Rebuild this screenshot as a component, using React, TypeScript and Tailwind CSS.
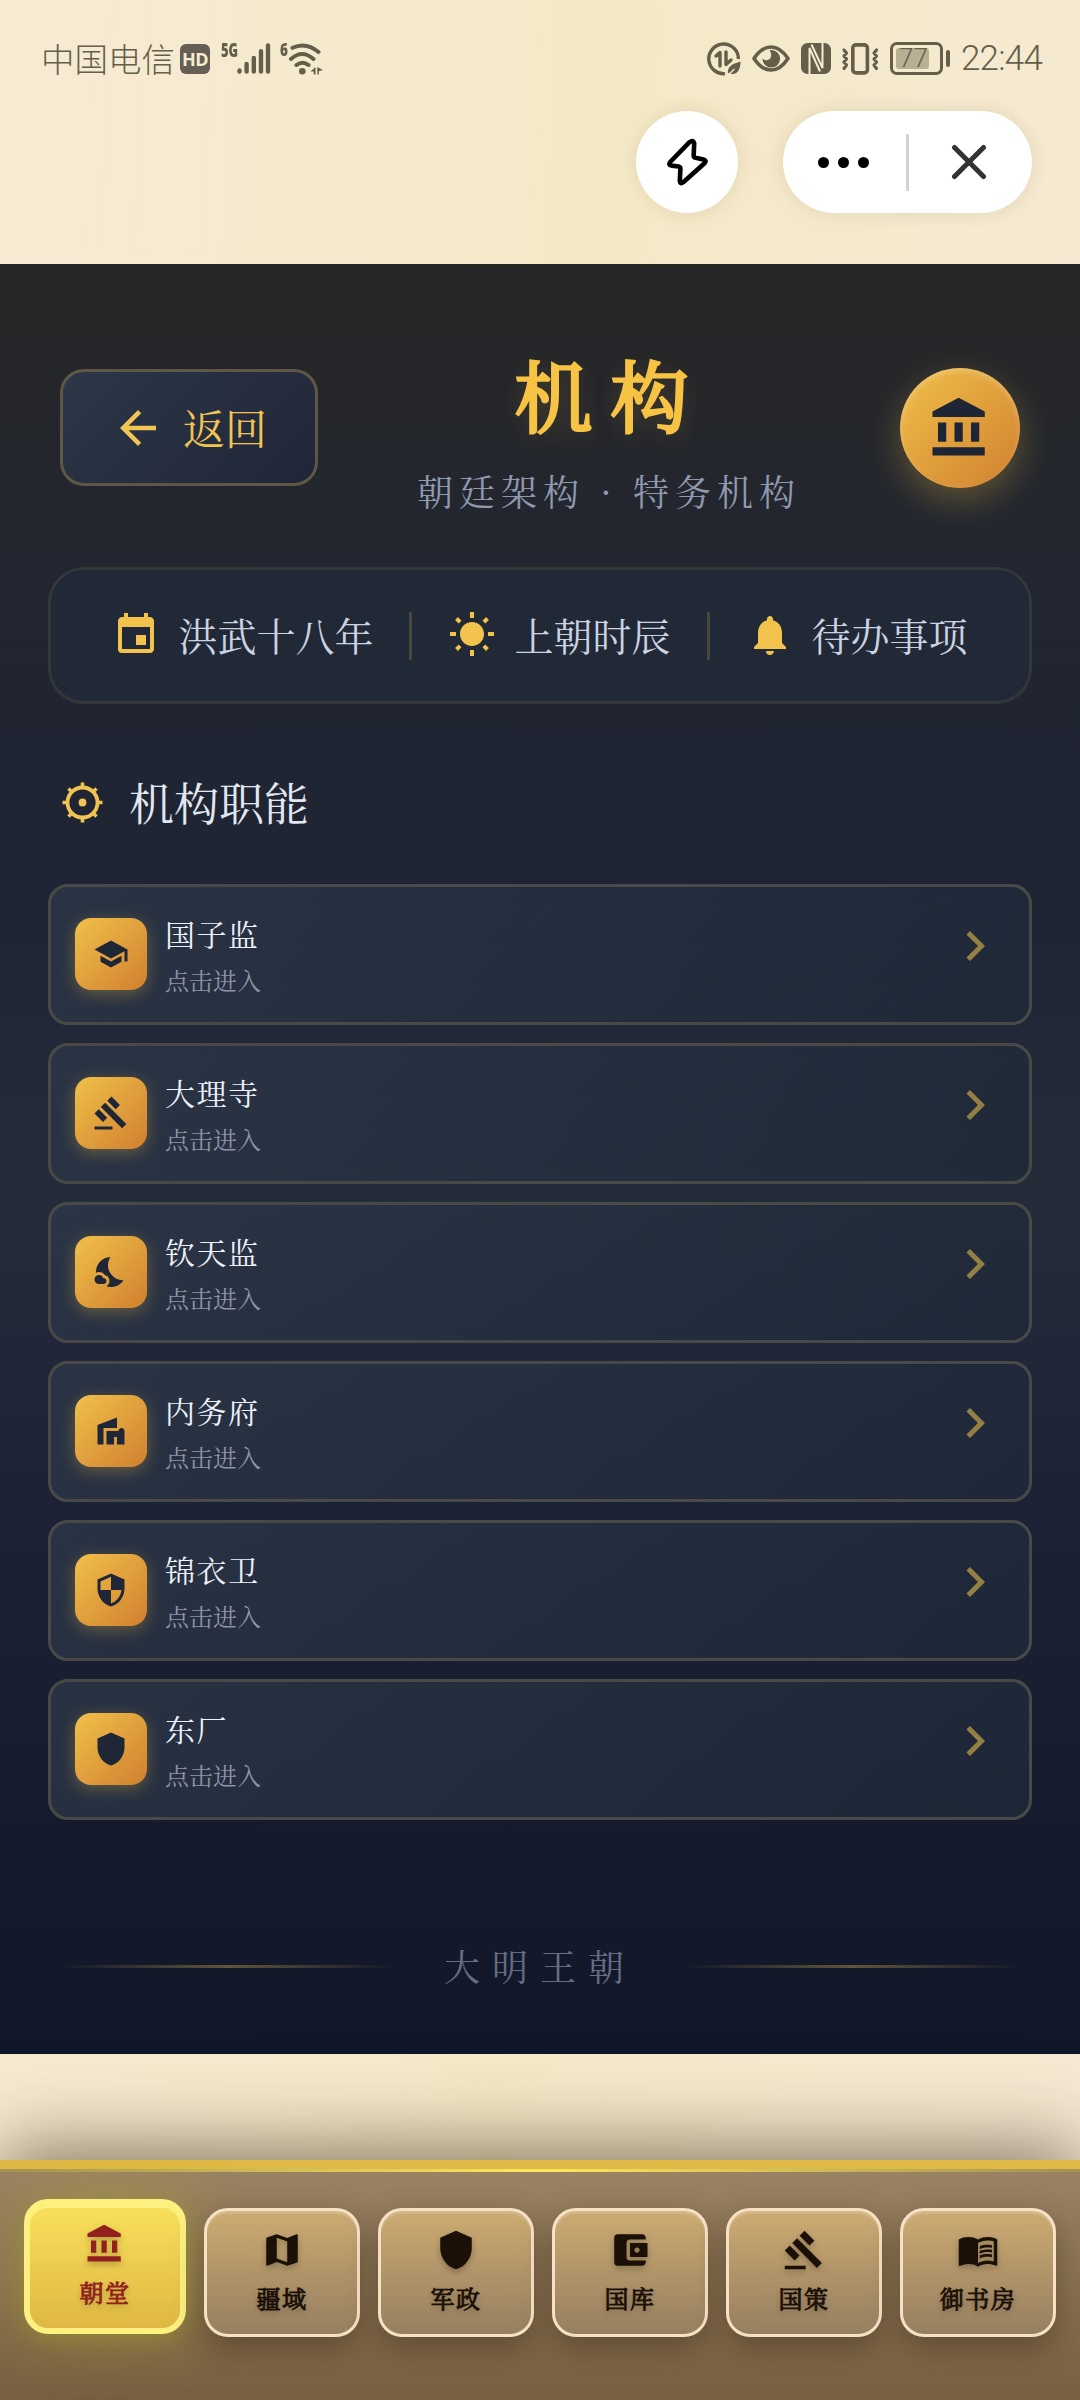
import {
  MdAccountBalanceWallet,
  MdArrowBack,
  MdChevronRight,
  MdEvent,
  MdGavel,
  MdMap,
  MdMenuBook,
  MdNightsStay,
  MdNotifications,
  MdSchool,
  MdSecurity,
  MdShield,
  MdVilla,
  MdWbSunny,
} from "react-icons/md"

const departments = [
  { name: "国子监", icon: MdSchool },
  { name: "大理寺", icon: MdGavel },
  { name: "钦天监", icon: MdNightsStay },
  { name: "内务府", icon: MdVilla },
  { name: "锦衣卫", icon: MdSecurity },
  { name: "东厂", icon: MdShield },
]

const infoItems = [
  { label: "洪武十八年", icon: MdEvent },
  { label: "上朝时辰", icon: MdWbSunny },
  { label: "待办事项", icon: MdNotifications },
]

const tabs = [
  { label: "朝堂", icon: HallIcon },
  { label: "疆域", icon: MdMap },
  { label: "军政", icon: MdShield },
  { label: "国库", icon: MdAccountBalanceWallet },
  { label: "国策", icon: MdGavel },
  { label: "御书房", icon: MdMenuBook },
]

function HallIcon({ className }: { className?: string }) {
  return (
    <svg className={className} viewBox="0 0 24 24" fill="currentColor">
      <path d="M4 10v7h3v-7H4zm6 0v7h3v-7h-3zM2 22h19v-3H2v3zm14-12v7h3v-7h-3zm-4.5-9L2 6v2h19V6l-9.5-5z" />
    </svg>
  )
}

function SignalIcon() {
  return (
    <svg width="34" height="31" viewBox="0 0 34 31" stroke="currentColor" strokeWidth="4.4" strokeLinecap="round">
      <path d="M2.5 27.5v1M9.6 21v7.6M16.8 15v13.6M24 8.2v20.4M31 2.5v26" />
    </svg>
  )
}

function WifiIcon() {
  return (
    <svg width="36" height="32" viewBox="0 0 36 32" fill="none" stroke="currentColor" strokeWidth="4" strokeLinecap="round">
      <path d="M4.5 4.8Q18 -1.5 30.5 9M3 16Q14 6 25.5 16M8.5 22Q14.5 17.5 20.5 22" />
      <circle cx="14.3" cy="28.3" r="3.3" fill="currentColor" stroke="none" />
      <path d="M22.5 28.5l5-4.5v7.5h-1.8v-3zM29.3 24v7.5h1.5v-3.2l4-1.3z" fill="currentColor" stroke="none" />
    </svg>
  )
}

function DataSaverIcon() {
  return (
    <svg width="34" height="34" viewBox="0 0 34 34" fill="none" stroke="currentColor" strokeWidth="3.4">
      <path d="M18 31.6A14.8 14.8 0 1 1 31.4 17" />
      <path d="M9 14l4-3.5V24M19 10v12.5l5-4.5" strokeLinejoin="round" strokeLinecap="round" />
      <path d="M21 31c-1-6 4-9 12.5-11.5C33.5 28 30 34.5 21 31z" fill="currentColor" stroke="none" />
      <path d="M20.5 33.5l7-6.5" stroke="#f5ebcf" strokeWidth="1.3" />
    </svg>
  )
}

function EyeIcon() {
  return (
    <svg width="38" height="27" viewBox="0 0 38 27" fill="none">
      <path d="M2 13.5Q9.5 2 19 2T36 13.5Q28.5 25 19 25T2 13.5z" stroke="currentColor" strokeWidth="3.6" strokeLinejoin="round" />
      <path d="M19.5 5a8.8 8.8 0 1 1-9 8.5 5 5 0 0 0 8.7-3Q19.5 8 17.5 5.2z" fill="currentColor" />
    </svg>
  )
}

function NfcIcon() {
  return (
    <svg width="30" height="31" viewBox="0 0 30 31">
      <rect width="30" height="31" rx="6.5" fill="currentColor" />
      <path d="M8.5 31V5L19 28.5M21.5 0V25L10.5 1.5" fill="none" stroke="#f5ebcf" strokeWidth="2" />
    </svg>
  )
}

function VibrateIcon() {
  return (
    <svg width="38" height="32" viewBox="0 0 38 32" fill="none" stroke="currentColor" strokeLinejoin="round" strokeLinecap="round">
      <rect x="11.8" y="1.9" width="14.6" height="28" rx="3.2" strokeWidth="3.6" />
      <path
        d="M3 7l2.5 3-2.5 3 2.5 3-2.5 3 2.5 3-2.5 3.5M35.5 7l-2.5 3 2.5 3-2.5 3 2.5 3-2.5 3 2.5 3.5"
        strokeWidth="3.2"
      />
    </svg>
  )
}

function BoltIcon() {
  return (
    <svg width="42" height="48" viewBox="0 0 42 48" fill="none" stroke="#000" strokeWidth="4.6" strokeLinejoin="round">
      <path d="M23.5 4.2L4.2 24Q2 27 5.5 27.6L12.6 28.5Q14.5 29 14.4 31L13.8 43Q14.2 46.5 17.3 44.2L38.5 25.2Q41 22.3 37.5 21.4L29.5 19.8Q27.6 19.3 27.7 17.2L28.2 5.2Q27 1.5 23.5 4.2z" />
    </svg>
  )
}

function HelmIcon() {
  return (
    <svg width="45" height="45" viewBox="0 0 45 45" fill="none" stroke="currentColor">
      <circle cx="22.5" cy="22.5" r="15" strokeWidth="3.8" />
      <circle cx="22.5" cy="22.5" r="3.9" fill="currentColor" stroke="none" />
      <path
        d="M22.5 2.5v5M22.5 37.5v5M2.5 22.5h5M37.5 22.5h5M8.5 8.5l3.5 3.5M33 33l3.5 3.5M8.5 36.5l3.5-3.5M33 12l3.5-3.5"
        strokeWidth="3.6"
      />
    </svg>
  )
}

function StatusBar() {
  return (
    <div className="flex h-[111px] items-start justify-between pl-[41px] pr-[37px] pt-[41px] text-[#645e4b]">
      <div className="flex items-start">
        <span className="font-['Noto_Sans_CJK_SC'] text-[33.5px] font-light leading-[34px]">中国电信</span>
        <span className="ml-[5px] mt-[3px] flex h-[30px] w-[30px] items-center justify-center rounded-md bg-[#645e54] font-['Open_Sans'] text-[18px] font-bold tracking-tight text-[#f7ecd3]">
          HD
        </span>
        <span className="ml-[11px] w-[16px] origin-left scale-x-[.68] font-['Open_Sans'] text-[19px] font-extrabold leading-[18px]">
          5G
        </span>
        <span className="mt-[2px]">
          <SignalIcon />
        </span>
        <span className="ml-[9px] w-[8px] origin-left scale-x-75 font-['Open_Sans'] text-[18px] font-extrabold leading-[17px]">
          6
        </span>
        <span className="mt-[2px]">
          <WifiIcon />
        </span>
      </div>
      <div className="flex h-[35px] items-center">
        <DataSaverIcon />
        <span className="ml-[11px]">
          <EyeIcon />
        </span>
        <span className="ml-[11px]">
          <NfcIcon />
        </span>
        <span className="ml-[10px]">
          <VibrateIcon />
        </span>
        <div className="ml-[11px] flex h-[33px] w-[53px] items-center rounded-[7px] border-3 border-current p-[3px]">
          <div className="flex h-full w-[33px] items-center justify-center rounded-[3px] bg-[#b9b093]">
            <span className="pl-[2px] font-[Roboto] text-[26px] font-light">77</span>
          </div>
        </div>
        <div className="ml-[3px] h-[17px] w-[4px] rounded-full bg-current" />
        <span className="ml-[11px] w-[82px] whitespace-nowrap font-[Roboto] text-[35px] font-light leading-[36px] tracking-[-0.8px]">
          22:44
        </span>
      </div>
    </div>
  )
}

function CapsuleButtons() {
  return (
    <div className="flex justify-end gap-[45px] pr-12">
      <button className="flex size-[102px] items-center justify-center rounded-full bg-white shadow-[0_0_18px_rgba(120,90,30,.14)]">
        <BoltIcon />
      </button>
      <div className="flex h-[102px] w-[249px] items-center rounded-full bg-white shadow-[0_0_18px_rgba(120,90,30,.14)]">
        <button className="flex w-[123px] justify-center gap-[9px] pr-[3px]">
          <i className="size-[11px] rounded-full bg-black" />
          <i className="size-[11px] rounded-full bg-black" />
          <i className="size-[11px] rounded-full bg-black" />
        </button>
        <div className="h-[57px] w-[3px] bg-[#d4d4d4]" />
        <button className="flex flex-1 justify-center pr-[3px]">
          <svg width="36" height="36" viewBox="0 0 36 36" stroke="#333" strokeWidth="5" strokeLinecap="round">
            <path d="M3.5 3.5l29 29M32.5 3.5l-29 29" />
          </svg>
        </button>
      </div>
    </div>
  )
}

function Header() {
  return (
    <header className="flex h-[204px] items-center justify-between px-3">
      <button className="mt-[27px] flex h-[117px] w-[258px] items-center gap-[18px] rounded-3xl border-3 border-[#5e5746] bg-linear-135 from-[#2d3748] to-[#1f2638] pl-12 text-[#f1c453]">
        <MdArrowBack className="size-[54px]" />
        <span className="text-[42px]">返回</span>
      </button>
      <div className="mt-[33px] flex flex-col items-center">
        <h1 className="pl-[3px] text-[78px] leading-[98px] tracking-[18px] text-[#f6c344] [-webkit-text-stroke:3px_#f6c344] [text-shadow:0_6px_24px_rgba(246,195,68,.25)]">
          机构
        </h1>
        <p className="mt-[22px] whitespace-nowrap text-[36px] leading-[54px] tracking-[6px] text-[#8f98ad]">
          朝廷架构 · 特务机构
        </p>
      </div>
      <div className="mt-[27px] flex size-[120px] items-center justify-center rounded-full bg-linear-135 from-[#f0c04a] to-[#d0802f] text-[#1d2537] shadow-[0_12px_36px_rgba(246,195,68,.3),inset_0_3px_6px_rgba(255,255,255,.25)]">
        <HallIcon className="size-[66px]" />
      </div>
    </header>
  )
}

function InfoBar() {
  return (
    <div className="mt-[51px] flex h-[137px] items-center justify-center gap-9 rounded-[36px] border-3 border-[#343739] bg-[#212936] text-[39px] text-[#cbd3e3]">
      {infoItems.map(({ label, icon: Icon }, idx) => (
        <div key={label} className="flex items-center gap-9">
          {idx > 0 && <div className="h-12 w-[3px] bg-[#4b463c]" />}
          <div className="flex items-center gap-[18px] pb-[2px]">
            <Icon className="size-12 text-[#f3c24c]" />
            <span className="pb-[2px] leading-[54px]">{label}</span>
          </div>
        </div>
      ))}
    </div>
  )
}

function DepartmentCard({ name, icon: Icon }: (typeof departments)[number]) {
  return (
    <div className="flex h-[141px] items-center rounded-[20px] border-3 border-[#494a47] bg-linear-135 from-[#2d3748]/80 to-[#1f2938]/80 px-6 pb-[2px]">
      <div className="flex size-[72px] items-center justify-center rounded-2xl bg-linear-135 from-[#f0c04a] to-[#d0802f] text-[#1f2737] shadow-[0_4px_16px_rgba(246,195,68,.3)]">
        <Icon className="size-9" />
      </div>
      <div className="ml-[18px] flex-1">
        <h3 className="text-[30px] leading-[42px] tracking-[1.5px] text-[#eef2fa]">{name}</h3>
        <p className="mt-[9px] text-[24px] leading-[33px] text-[#8d95a9]">点击进入</p>
      </div>
      <MdChevronRight className="mb-4 size-[60px] text-[#948044]" />
    </div>
  )
}

function TabBar() {
  return (
    <nav className="h-[240px] border-t-[9px] border-[#dfb945] bg-linear-to-b from-[#9a8363] to-[#785f40] shadow-[0_-12px_72px_rgba(40,30,10,.55)]">
      <div className="h-[3px] bg-linear-to-r from-[#a39152] via-[#ffe75c] to-[#a39152]" />
      <div className="flex items-center gap-[18px] px-6 pt-9">
        {tabs.map(({ label, icon: Icon }, idx) =>
          idx === 0 ? (
            <button
              key={label}
              className="mt-[-12px] flex h-[135px] w-[162px] flex-col items-center rounded-[24px] border-6 border-[#fdf07f] bg-linear-to-b from-[#f9e05b] to-[#dfb843] pt-[18px] text-[#92201f] shadow-[0_0_60px_rgba(180,180,40,.4),0_6px_18px_rgba(150,140,50,.4),inset_0_3px_0_rgba(255,245,140,.8)]"
            >
              <HallIcon className="size-[42px] drop-shadow-[0_3px_3px_rgba(0,0,0,.25)]" />
              <span className="mt-[9px] text-[24px] leading-[36px] tracking-[1.5px] [-webkit-text-stroke:0.9px_currentColor] [text-shadow:0_3px_6px_rgba(0,0,0,.3)]">
                {label}
              </span>
            </button>
          ) : (
            <button
              key={label}
              className="flex h-[129px] w-[156px] flex-col items-center rounded-[24px] border-3 border-[#f6e1c5] bg-linear-to-b from-[#cdab72] to-[#967f60] pt-[18px] text-[#1a1008] shadow-[0_12px_30px_rgba(50,35,20,.4),inset_0_3px_0_rgba(255,255,255,.15)]"
            >
              <Icon className="size-[42px] drop-shadow-[0_3px_3px_rgba(0,0,0,.25)]" />
              <span className="mt-[9px] text-[24px] leading-[36px] tracking-[1.5px] [-webkit-text-stroke:0.9px_currentColor] [text-shadow:0_3px_6px_rgba(0,0,0,.3)]">
                {label}
              </span>
            </button>
          ),
        )}
      </div>
    </nav>
  )
}

export default function App() {
  return (
    <div className="h-[2400px] w-[1080px] overflow-hidden bg-[linear-gradient(93deg,#f6ead3_0%,#f5eacd_30%,#f4e9c6_50%,#f5e9cd_70%,#f5e9d3_100%)] font-['Noto_Serif_CJK_SC','Noto_Sans_CJK_SC',serif]">
      <div className="h-[264px]">
        <StatusBar />
        <CapsuleButtons />
      </div>
      <main className="h-[1790px] bg-[linear-gradient(180deg,#262626_0%,#22262f_15%,#1f2435_35%,#242c3a_52%,#1d2135_70%,#151b2c_88%,#11172a_100%)] px-12 pt-[48px]">
        <Header />
        <InfoBar />
        <div className="mt-[71px] flex h-[54px] items-center gap-6 pl-3 text-[#f0c453]">
          <HelmIcon />
          <h2 className="pb-[1px] text-[45px] leading-[54px] text-[#e2e8f0]">机构职能</h2>
        </div>
        <div className="mt-[55px] flex flex-col gap-[18px]">
          {departments.map((dept) => (
            <DepartmentCard key={dept.name} {...dept} />
          ))}
        </div>
        <div className="mt-[119px] flex items-center gap-12 px-3">
          <div className="h-[3px] flex-1 bg-linear-to-r from-transparent via-[#5f5637] to-transparent" />
          <span className="text-[36px] leading-[54px] tracking-[12px] text-[#666d80]">大明王朝</span>
          <div className="h-[3px] flex-1 bg-linear-to-r from-transparent via-[#5f5637] to-transparent" />
        </div>
      </main>
      <div className="h-[106px]" />
      <TabBar />
    </div>
  )
}
